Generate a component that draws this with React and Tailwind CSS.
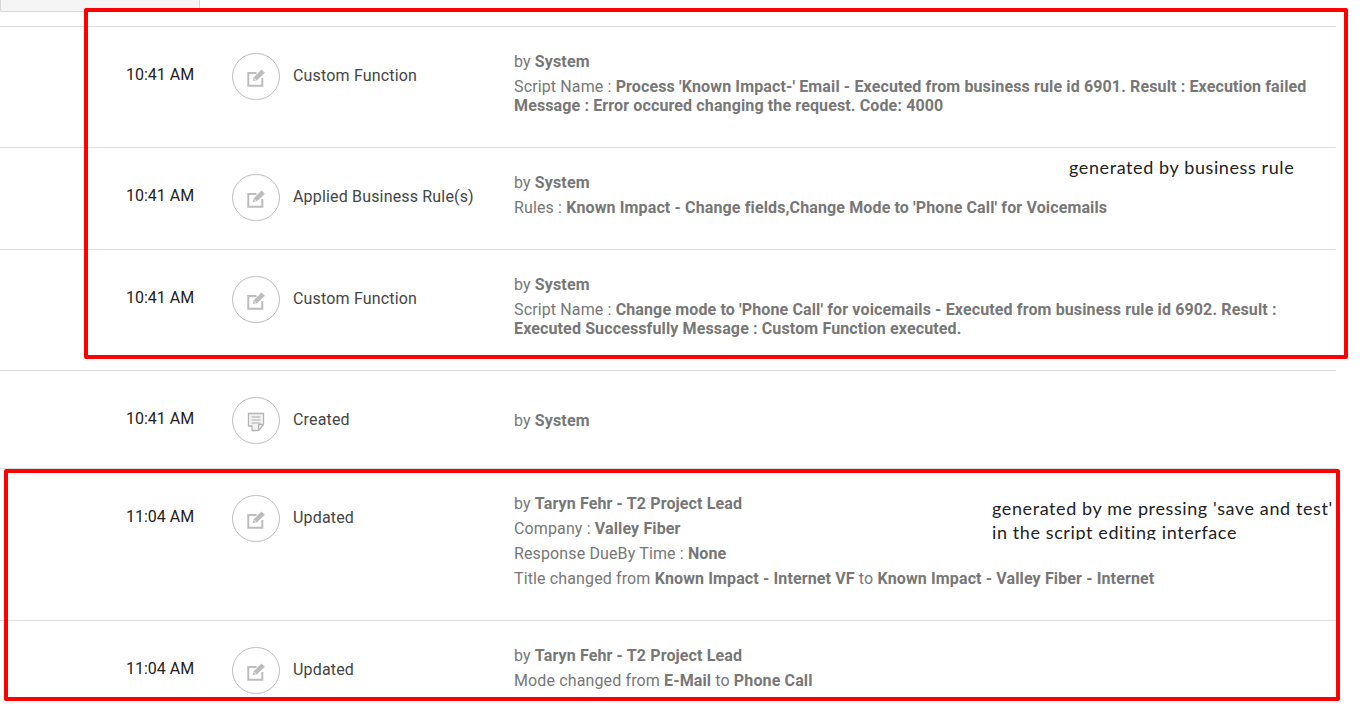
const EditIcon = () => (
  <svg width="20" height="20" viewBox="0 0 20 20" fill="none" className="mt-[3px]">
    <path d="M10.5 5H2.3V17.7H16.3V10" stroke="#bdbdbd" strokeWidth="2" />
    <path d="M6.7 13L7.8 9.2L15.5 1.6L18.9 4.8L11 12.2Z" fill="#bdbdbd" />
    <path d="M7.9 10.2L10 12.3" stroke="#ffffff" strokeWidth="0.8" />
  </svg>
);

const NoteIcon = () => (
  <svg width="18" height="20" viewBox="0 0 18 20" fill="none" className="mt-[3px]">
    <path d="M1.5 1.5H16.5V12.5L11.5 18.5H5V14H1.5Z" fill="#f4f4f4" stroke="#b5b5b5" strokeWidth="1.3" />
    <path d="M4.5 5H13.5M4.5 8H13.5M4.5 11H13.5" stroke="#a8a8a8" strokeWidth="1.2" />
    <path d="M11.5 18V12.5H16" stroke="#b5b5b5" strokeWidth="1.3" />
  </svg>
);

const B = ({ children }) => <span className="font-bold">{children}</span>;

const rows = [
  {
    time: "10:41 AM",
    label: "Custom Function",
    height: "h-[121px]",
    body: (
      <>
        <p className="leading-[25px]">by <B>System</B></p>
        <p className="leading-[19px] mt-[3px]">
          Script Name : <B>Process 'Known Impact-' Email - Executed from business rule id 6901. Result : Execution failed Message : Error occured changing the request. Code: 4000</B>
        </p>
      </>
    ),
  },
  {
    time: "10:41 AM",
    label: "Applied Business Rule(s)",
    height: "h-[102px]",
    body: (
      <>
        <p className="leading-[25px]">by <B>System</B></p>
        <p className="leading-[25px]">Rules : <B>Known Impact - Change fields,Change Mode to 'Phone Call' for Voicemails</B></p>
      </>
    ),
  },
  {
    time: "10:41 AM",
    label: "Custom Function",
    height: "h-[121px]",
    body: (
      <>
        <p className="leading-[25px]">by <B>System</B></p>
        <p className="leading-[19px] mt-[3px]">
          Script Name : <B>Change mode to 'Phone Call' for voicemails - Executed from business rule id 6902. Result : Executed Successfully Message : Custom Function executed.</B>
        </p>
      </>
    ),
  },
  {
    time: "10:41 AM",
    label: "Created",
    note: true,
    height: "h-[98px]",
    body: <p className="leading-[25px] mt-[15px]">by <B>System</B></p>,
  },
  {
    time: "11:04 AM",
    label: "Updated",
    height: "h-[152px]",
    body: (
      <>
        <p className="leading-[25px]">by <B>Taryn Fehr - T2 Project Lead</B></p>
        <p className="leading-[25px]">Company : <B>Valley Fiber</B></p>
        <p className="leading-[25px]">Response DueBy Time : <B>None</B></p>
        <p className="leading-[25px]">Title changed from <B>Known Impact - Internet VF</B> to <B>Known Impact - Valley Fiber - Internet</B></p>
      </>
    ),
  },
  {
    time: "11:04 AM",
    label: "Updated",
    height: "h-[87px]",
    body: (
      <>
        <p className="leading-[25px]">by <B>Taryn Fehr - T2 Project Lead</B></p>
        <p className="leading-[25px]">Mode changed from <B>E-Mail</B> to <B>Phone Call</B></p>
      </>
    ),
  },
];

function Row({ row }) {
  return (
    <div className={`flex w-[1336px] border-t border-[#dddddd] pl-[126px] pt-[22px] ${row.height}`}>
      <div className="w-[106px] pt-[16px] text-[16px] leading-[20px] text-[#222222]">{row.time}</div>
      <div className="w-12 h-[47px] mt-[4px] rounded-full border border-[#bdbdbd] flex items-center justify-center">
        {row.note ? <NoteIcon /> : <EditIcon />}
      </div>
      <div className="w-[234px] pl-[13px] pt-[17px] text-[16px] leading-[20px] tracking-[0.17px] text-[#444444]">{row.label}</div>
      <div className="flex-1 text-[16px] tracking-[0.13px] text-[#777777]">{row.body}</div>
    </div>
  );
}

export default function App() {
  return (
    <div className="relative w-[1372px] h-[707px] overflow-hidden bg-white font-['Roboto',sans-serif]">
      <div className="w-[200px] h-[12px] bg-[#f5f5f5] border border-t-0 border-[#d8d8d8] rounded-b-[2px]"></div>
      <div className="mt-[14px]">
        {rows.map((row, i) => (
          <Row key={i} row={row} />
        ))}
      </div>

      <div className="absolute left-[84px] top-[8px] w-[1264px] h-[351px] border-4 border-[#ff0000] rounded-[2px]"></div>
      <div className="absolute left-[4px] top-[469px] w-[1336px] h-[232px] border-4 border-[#ff0000] rounded-[2px]"></div>

      <div className="absolute left-[1069px] top-[155px] text-[18px] leading-[24px] tracking-[0.6px] text-[#222222] font-['Lato',sans-serif]">generated by business rule</div>
      <div className="absolute left-[992px] top-[496px] h-[44px] overflow-hidden text-[18px] leading-[24px] tracking-[0.6px] text-[#222222] font-['Lato',sans-serif] whitespace-nowrap">
        <div>generated by me pressing 'save and test'</div>
        <div>in the script editing interface</div>
      </div>
    </div>
  );
}
